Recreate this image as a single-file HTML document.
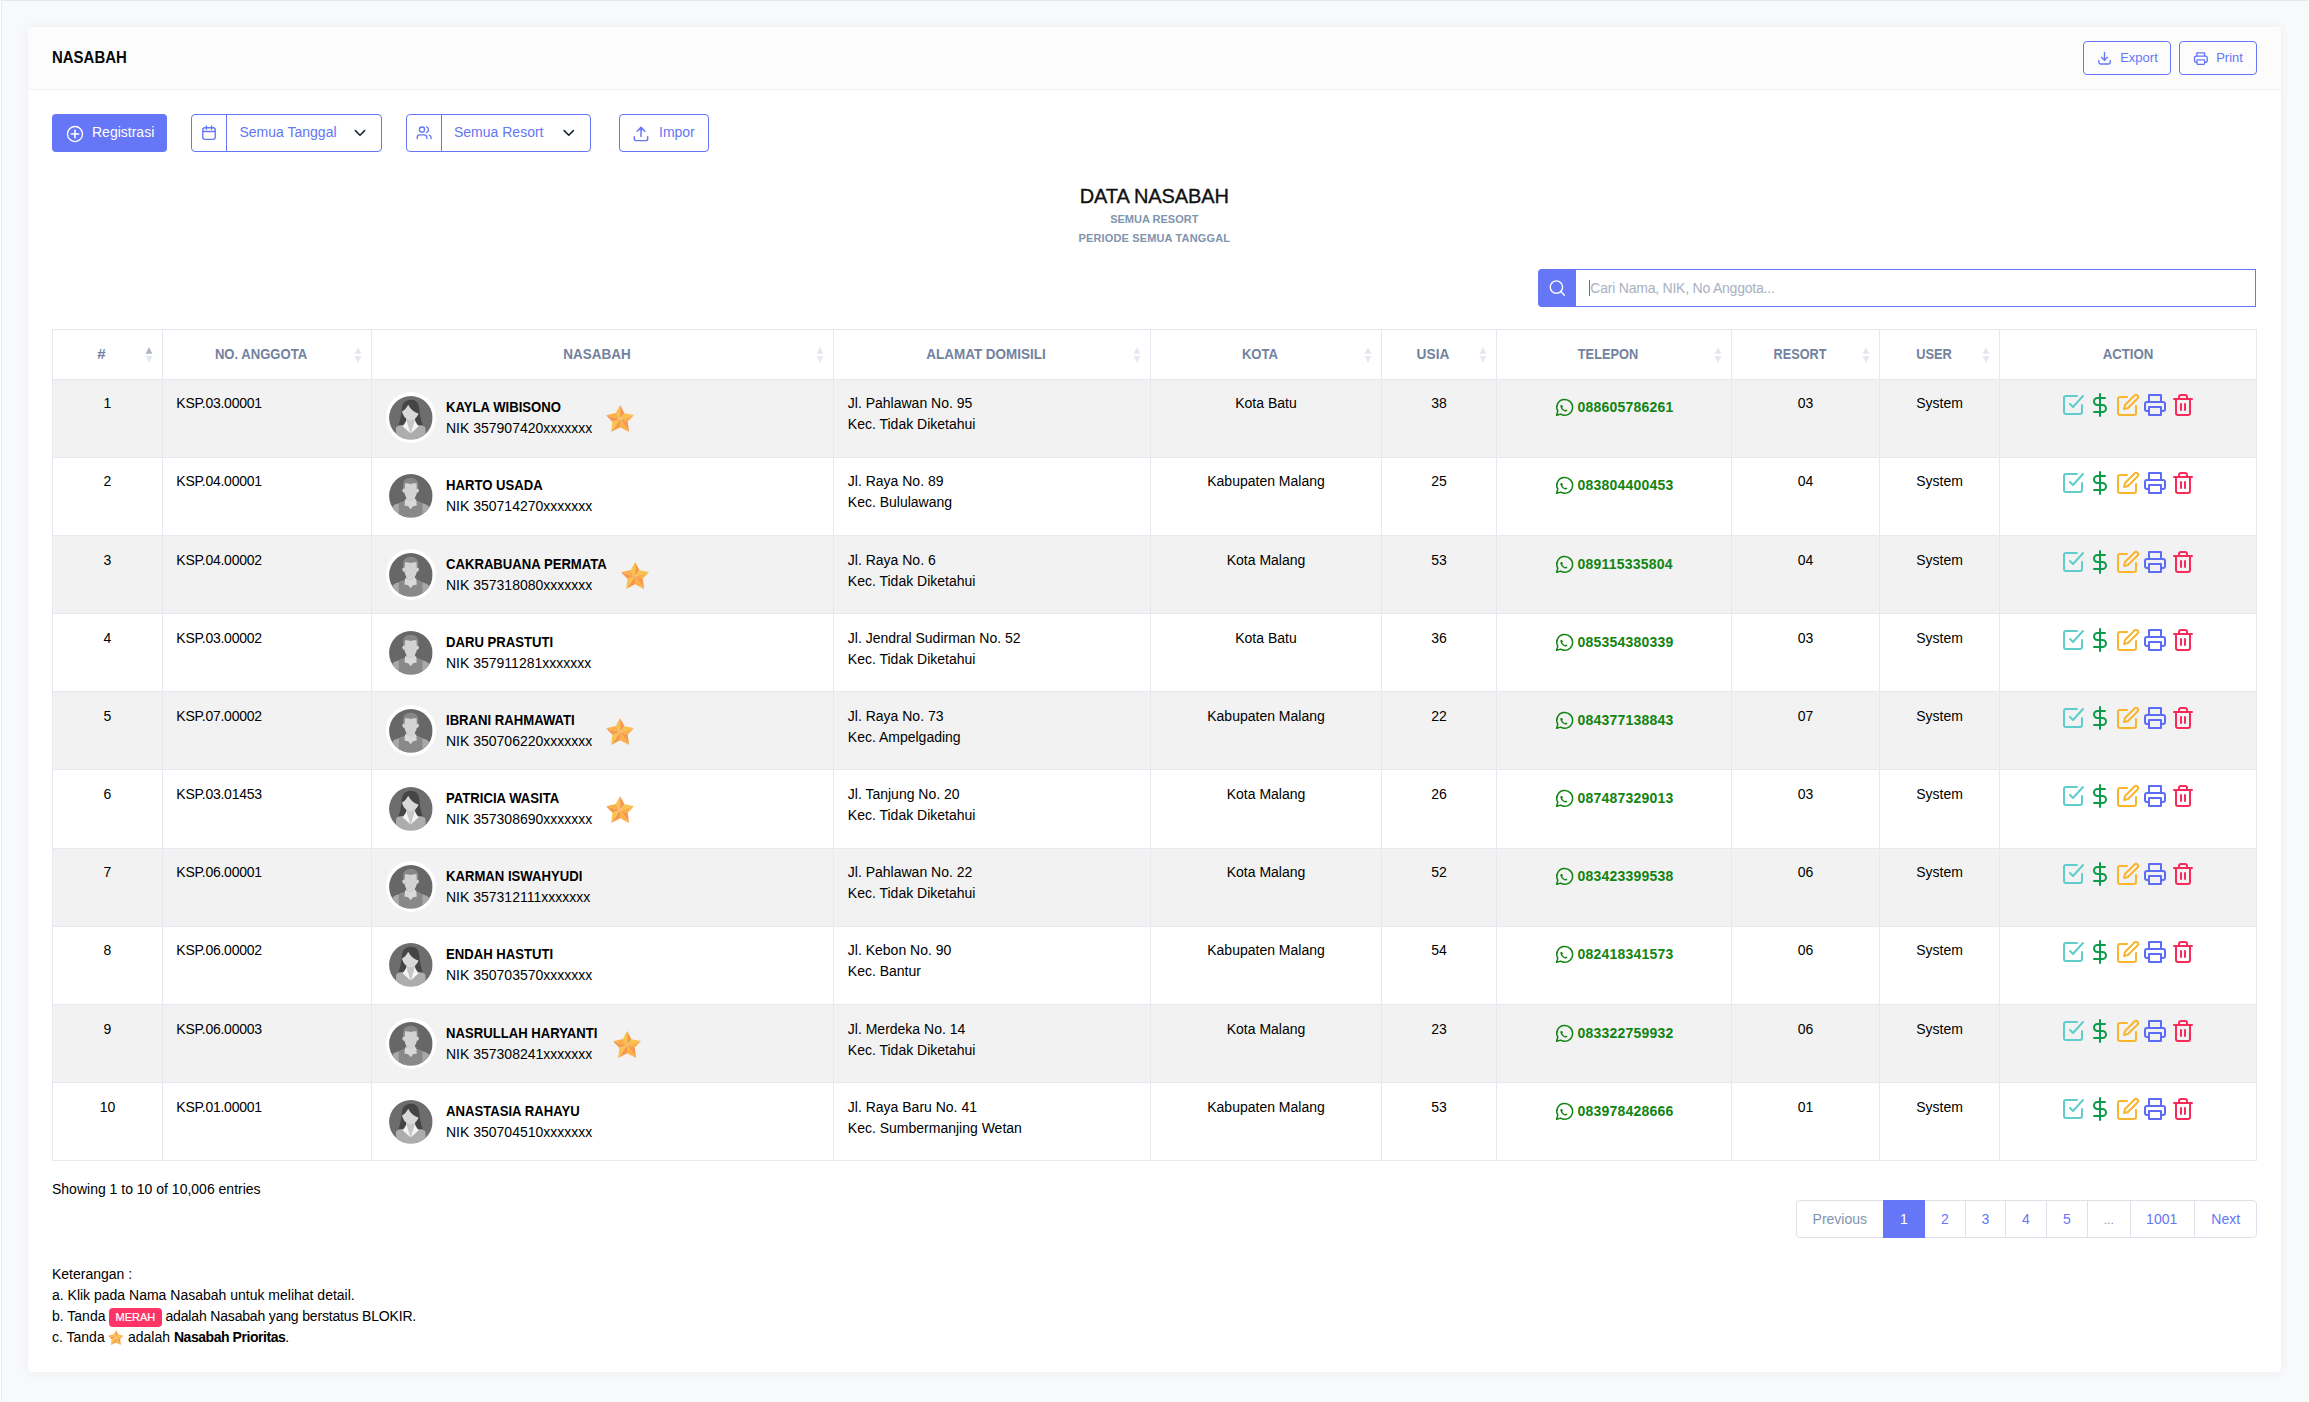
<!DOCTYPE html>
<html><head><meta charset="utf-8"><title>Nasabah</title>
<style>
html,body{margin:0;padding:0;}
body{width:2309px;height:1402px;overflow:hidden;position:relative;background:#f8f9fb;font-family:"Liberation Sans",sans-serif;}
.t{position:absolute;white-space:nowrap;line-height:20px;font-family:"Liberation Sans",sans-serif;}
svg{overflow:visible;}
</style></head><body>

<svg width="0" height="0" style="position:absolute">
<defs>
<symbol id="star" viewBox="0 0 28 27">
 <polygon points="14.1,14.1 9.8,7.9 14.1,0" fill="#f6c44b"/>
 <polygon points="14.1,14.1 14.1,0 18.5,8.2" fill="#f8994a"/>
 <polygon points="14.1,14.1 18.5,8.2 28,10" fill="#f7c34a"/>
 <polygon points="14.1,14.1 28,10 21.8,16.7" fill="#fbb147"/>
 <polygon points="14.1,14.1 21.8,16.7 23.1,26.9" fill="#f8994a"/>
 <polygon points="14.1,14.1 23.1,26.9 14.1,22.3" fill="#fbb147"/>
 <polygon points="14.1,14.1 14.1,22.3 5.1,26.9" fill="#f8994a"/>
 <polygon points="14.1,14.1 5.1,26.9 6.4,16.7" fill="#f6c44b"/>
 <polygon points="14.1,14.1 6.4,16.7 0,10.2" fill="#f8994a"/>
 <polygon points="14.1,14.1 0,10.2 9.8,7.9" fill="#fbb147"/>
</symbol>
<clipPath id="avclip"><circle cx="22" cy="22" r="21.9"/></clipPath>
<symbol id="avf" viewBox="0 0 44 44">
 <g clip-path="url(#avclip)">
 <rect width="44" height="44" fill="#6d6d6d"/>
 <path d="M21.8,3.8 C16,3.8 13.4,7.5 12.8,13 C12.2,19 11.5,24 9.5,29.8 L34,29.8 C32,24 31,19 30.6,13 C30,7 27.5,3.8 21.8,3.8 Z" fill="#454545"/>
 <path d="M17.6,21 L26.2,21 L26.6,28 L21.8,37.6 L17,28 Z" fill="#c7c7c7"/>
 <path d="M19.4,8.8 C17.5,12 15.5,14.5 13,15.6 C14.2,19.8 16.6,23.8 21.8,24.6 C26.6,23.8 28.6,20.6 29.8,17.6 C25,16.5 21.5,13 19.4,8.8 Z" fill="#d9d9d9"/>
 <path d="M7,44 L7,33 C7,31 8.5,30 11,29.8 L16.6,28.6 L21.8,37.6 L27.1,28.6 L32.6,29.8 C35,30 36.8,31 36.8,33 L36.8,44 Z" fill="#adadad"/>
 <path d="M17.9,24.2 L13.9,30.6 L21.8,37.7 L18.2,27 Z M25.7,24.2 L29.7,30.6 L21.8,37.7 L25.4,27 Z" fill="#f4f4f4"/>
 </g>
</symbol>
<symbol id="avm" viewBox="0 0 44 44">
 <g clip-path="url(#avclip)">
 <rect width="44" height="44" fill="#676767"/>
 <path d="M21.8,3.9 C16.8,3.9 14.1,6.8 14.1,11.2 L14.2,15.2 L29.4,15.2 L29.5,11.2 C29.5,6.8 26.8,3.9 21.8,3.9 Z" fill="#878787"/>
 <path d="M17.4,21 L26.2,21 L26.2,29 L17.4,29 Z" fill="#cfcfcf"/>
 <path d="M16.2,9.4 C18.3,8.9 20,9.4 21.8,10 C23.6,9.4 25.4,8.9 27.8,9.4 L27.9,14.8 C29,14.6 30.4,15 30.2,16.6 C30,18.2 29.2,18.9 28,19 C27.4,23 25.2,26 21.8,26.1 C18.4,26 16.2,23 15.6,19 C14.4,18.9 13.6,18.2 13.4,16.6 C13.2,15 14.6,14.6 15.7,14.8 Z" fill="#d3d3d3"/>
 <path d="M0,44 L0,36 L6,30.6 L10,29.4 L16.2,27 L21.8,35.6 L27.4,27 L33.6,29.4 L37.6,30.6 L44,36 L44,44 Z" fill="#a9a9a9"/>
 <path d="M9.9,44 L9.9,29.6 L16.2,27.6 L21.8,35.6 L27.4,27.6 L33.7,29.6 L33.7,44 Z" fill="#898989"/>
 <path d="M16.3,25.2 L21.8,27.6 L27.3,25.2 L28,31.6 L24.2,32.6 L21.8,35.4 L19.4,32.6 L15.6,31.6 Z" fill="#d9d9d9"/>
 </g>
</symbol>
</defs></svg>

<div style="position:absolute;left:0px;top:0px;width:2309px;height:1px;background:#e6e8ec"></div>
<div style="position:absolute;left:0px;top:0px;width:1px;height:1402px;background:#fdfdfd"></div>
<div style="position:absolute;left:1px;top:1px;width:1px;height:1401px;background:#e9ebef"></div>
<div style="position:absolute;left:2308px;top:0px;width:1px;height:1402px;background:#fdfdfd"></div>
<div style="position:absolute;left:28px;top:27px;width:2253px;height:1345px;background:#fff;border-radius:4px;box-shadow:0 0 10px 1px rgba(40,50,80,0.05)"></div>
<div style="position:absolute;left:28px;top:27px;width:2253px;height:62px;background:#fcfcfd;border-radius:4px 4px 0 0"></div>
<div style="position:absolute;left:28px;top:89px;width:2253px;height:1px;background:#f0f1f6"></div>
<div class="t" style="left:52.3px;top:48px;font-size:16px;font-weight:700;color:#0a0a0a;transform:scaleX(0.9350);transform-origin:left center;">NASABAH</div>
<div style="position:absolute;left:2083px;top:41px;width:86px;height:32px;border:1px solid #6576f6;border-radius:4px"></div>
<svg style="position:absolute;left:2096px;top:50px;" width="17" height="17" viewBox="0 0 17 17"><g fill="none" stroke="#6576f6" stroke-width="1.35" stroke-linecap="round" stroke-linejoin="round"><path d="M8.5,2.4 V10.4 M5.5,7.2 L8.5,10.4 L11.5,7.2"/><path d="M2.8,10.4 V12.2 A1.8,1.8 0 0 0 4.6,14 H12.4 A1.8,1.8 0 0 0 14.2,12.2 V10.4"/></g></svg>
<div class="t" style="left:2120.2px;top:48px;font-size:13px;font-weight:400;color:#6576f6;">Export</div>
<div style="position:absolute;left:2179px;top:41px;width:76px;height:32px;border:1px solid #6576f6;border-radius:4px"></div>
<svg style="position:absolute;left:2193px;top:50px;" width="16" height="17" viewBox="0 0 16 17"><g fill="none" stroke="#6576f6" stroke-width="1.35" stroke-linecap="round" stroke-linejoin="round"><path d="M3.9,6.1 V2.8 H11.6 V6.1"/><path d="M3.9,12.4 H2.9 A1.6,1.6 0 0 1 1.5,10.8 V7.7 A1.6,1.6 0 0 1 3.1,6.1 H12.6 A1.6,1.6 0 0 1 14.2,7.7 V10.8 A1.6,1.6 0 0 1 12.6,12.4 H11.6"/><rect x="3.9" y="9.8" width="7.7" height="4.6" rx="0.8"/></g></svg>
<div class="t" style="left:2216.2px;top:48px;font-size:13px;font-weight:400;color:#6576f6;">Print</div>
<div style="position:absolute;left:52px;top:114px;width:115px;height:38px;background:#6576f6;border-radius:4px"></div>
<svg style="position:absolute;left:64px;top:123px;" width="22" height="22" viewBox="0 0 22 22"><g fill="none" stroke="#fff" stroke-linecap="round"><circle cx="11" cy="11" r="7.55" stroke-width="1.35"/><path d="M11,7.3 V14.7 M7.3,11 H14.7" stroke-width="1.6"/></g></svg>
<div class="t" style="left:92px;top:122px;font-size:14px;font-weight:400;color:#fff;">Registrasi</div>
<div style="position:absolute;left:191px;top:114px;width:189px;height:36px;border:1px solid #6576f6;border-radius:4px"></div>
<div style="position:absolute;left:226px;top:114px;width:1px;height:38px;background:#6576f6"></div>
<svg style="position:absolute;left:200px;top:123px;" width="18" height="20" viewBox="0 0 18 20"><g fill="none" stroke="#6576f6" stroke-width="1.35" stroke-linecap="round" stroke-linejoin="round"><rect x="2.8" y="4.7" width="12.4" height="11.6" rx="2"/><path d="M2.8,8.5 H15.2 M6.4,2.8 V6.2 M11.6,2.8 V6.2"/></g></svg>
<div class="t" style="left:239.5px;top:122px;font-size:14px;font-weight:400;color:#6576f6;">Semua Tanggal</div>
<svg style="position:absolute;left:352px;top:127px;" width="16" height="12" viewBox="0 0 16 12"><path d="M3.4,3.6 L8,8.3 L12.6,3.6" fill="none" stroke="#1c2536" stroke-width="1.6" stroke-linecap="round" stroke-linejoin="round"/></svg>
<div style="position:absolute;left:406px;top:114px;width:183px;height:36px;border:1px solid #6576f6;border-radius:4px"></div>
<div style="position:absolute;left:441px;top:114px;width:1px;height:38px;background:#6576f6"></div>
<svg style="position:absolute;left:414px;top:123px;" width="20" height="20" viewBox="0 0 20 20"><g fill="none" stroke="#6576f6" stroke-width="1.35" stroke-linecap="round" stroke-linejoin="round"><circle cx="8" cy="6.6" r="2.6"/><path d="M3.2,15.6 V14.5 A2.6,2.6 0 0 1 5.8,11.9 H10.2 A2.6,2.6 0 0 1 12.8,14.5 V15.6"/><path d="M12.4,3.8 A3.05,3.05 0 0 1 12.4,9.6"/><path d="M17.1,15.6 V14.7 A2.9,2.9 0 0 0 15.2,12.1"/></g></svg>
<div class="t" style="left:454px;top:122px;font-size:14px;font-weight:400;color:#6576f6;">Semua Resort</div>
<svg style="position:absolute;left:561px;top:127px;" width="16" height="12" viewBox="0 0 16 12"><path d="M3.2,3.6 L7.8,8.3 L12.4,3.6" fill="none" stroke="#1c2536" stroke-width="1.6" stroke-linecap="round" stroke-linejoin="round"/></svg>
<div style="position:absolute;left:619px;top:114px;width:88px;height:36px;border:1px solid #6576f6;border-radius:4px"></div>
<svg style="position:absolute;left:630px;top:123px;" width="20" height="20" viewBox="0 0 20 20"><g fill="none" stroke="#6576f6" stroke-width="1.45" stroke-linecap="round" stroke-linejoin="round"><path d="M11,4.2 V13.6 M7.2,8.2 L11,4.2 L14.8,8.2"/><path d="M4.3,13.6 V15.8 A1.8,1.8 0 0 0 6.1,17.6 H15.9 A1.8,1.8 0 0 0 17.7,15.8 V13.6"/></g></svg>
<div class="t" style="left:659px;top:122px;font-size:14px;font-weight:400;color:#6576f6;">Impor</div>
<div class="t" style="left:854.30px;top:186px;width:600px;text-align:center;font-size:20px;font-weight:400;color:#111;-webkit-text-stroke:0.35px #111;letter-spacing:-0.1px">DATA NASABAH</div>
<div class="t" style="left:854.30px;top:209px;width:600px;text-align:center;font-size:11px;font-weight:700;color:#8094ae;">SEMUA RESORT</div>
<div class="t" style="left:854.30px;top:228px;width:600px;text-align:center;font-size:11px;font-weight:700;color:#8094ae;letter-spacing:0.15px">PERIODE SEMUA TANGGAL</div>
<div style="position:absolute;left:1538px;top:269px;width:38px;height:38px;background:#6576f6;border-radius:4px 0 0 4px"></div>
<div style="position:absolute;left:1576px;top:269px;width:679px;height:36px;border:1px solid #6576f6;border-left:none"></div>
<svg style="position:absolute;left:1544px;top:275px;" width="26" height="26" viewBox="0 0 26 26"><g fill="none" stroke="#fff" stroke-width="1.4" stroke-linecap="round"><circle cx="12.4" cy="12.1" r="6.2"/><path d="M16.8,16.6 L20.4,20.2"/></g></svg>
<div style="position:absolute;left:1589px;top:280px;width:1px;height:16px;background:#5563f0"></div>
<div class="t" style="left:1590.3px;top:278px;font-size:14px;font-weight:400;color:#a8b1c1;letter-spacing:-0.22px">Cari Nama, NIK, No Anggota...</div>
<div style="position:absolute;left:52px;top:380px;width:2205px;height:77px;background:#f2f2f2"></div>
<div style="position:absolute;left:52px;top:536px;width:2205px;height:77px;background:#f2f2f2"></div>
<div style="position:absolute;left:52px;top:692px;width:2205px;height:77px;background:#f2f2f2"></div>
<div style="position:absolute;left:52px;top:849px;width:2205px;height:77px;background:#f2f2f2"></div>
<div style="position:absolute;left:52px;top:1005px;width:2205px;height:77px;background:#f2f2f2"></div>
<div style="position:absolute;left:52px;top:329px;width:2205px;height:1px;background:#e6e9ef"></div>
<div style="position:absolute;left:52px;top:379px;width:2205px;height:1px;background:#e6e9ef"></div>
<div style="position:absolute;left:52px;top:457px;width:2205px;height:1px;background:#e6e9ef"></div>
<div style="position:absolute;left:52px;top:535px;width:2205px;height:1px;background:#e6e9ef"></div>
<div style="position:absolute;left:52px;top:613px;width:2205px;height:1px;background:#e6e9ef"></div>
<div style="position:absolute;left:52px;top:691px;width:2205px;height:1px;background:#e6e9ef"></div>
<div style="position:absolute;left:52px;top:769px;width:2205px;height:1px;background:#e6e9ef"></div>
<div style="position:absolute;left:52px;top:848px;width:2205px;height:1px;background:#e6e9ef"></div>
<div style="position:absolute;left:52px;top:926px;width:2205px;height:1px;background:#e6e9ef"></div>
<div style="position:absolute;left:52px;top:1004px;width:2205px;height:1px;background:#e6e9ef"></div>
<div style="position:absolute;left:52px;top:1082px;width:2205px;height:1px;background:#e6e9ef"></div>
<div style="position:absolute;left:52px;top:1160px;width:2205px;height:1px;background:#e6e9ef"></div>
<div style="position:absolute;left:52px;top:329px;width:1px;height:832px;background:#e6e9ef"></div>
<div style="position:absolute;left:162px;top:329px;width:1px;height:832px;background:#e6e9ef"></div>
<div style="position:absolute;left:371px;top:329px;width:1px;height:832px;background:#e6e9ef"></div>
<div style="position:absolute;left:833px;top:329px;width:1px;height:832px;background:#e6e9ef"></div>
<div style="position:absolute;left:1150px;top:329px;width:1px;height:832px;background:#e6e9ef"></div>
<div style="position:absolute;left:1381px;top:329px;width:1px;height:832px;background:#e6e9ef"></div>
<div style="position:absolute;left:1496px;top:329px;width:1px;height:832px;background:#e6e9ef"></div>
<div style="position:absolute;left:1731px;top:329px;width:1px;height:832px;background:#e6e9ef"></div>
<div style="position:absolute;left:1879px;top:329px;width:1px;height:832px;background:#e6e9ef"></div>
<div style="position:absolute;left:1999px;top:329px;width:1px;height:832px;background:#e6e9ef"></div>
<div style="position:absolute;left:2256px;top:329px;width:1px;height:832px;background:#e6e9ef"></div>
<div class="t" style="left:-48.50px;top:344px;width:300px;text-align:center;font-size:15px;font-weight:700;color:#7282a0;">#</div>
<svg style="position:absolute;left:144.5px;top:346px;" width="8" height="18" viewBox="0 0 8 18"><polygon points="0.6,7.7 4,1.1 7.4,7.7" fill="#a9b4c6"/><polygon points="0.6,9.9 7.4,9.9 4,16.9" fill="#e6e9ef"/></svg>
<div class="t" style="left:111.00px;top:344px;width:300px;text-align:center;font-size:15px;font-weight:700;color:#7282a0;transform:scaleX(0.8712);transform-origin:center center;">NO. ANGGOTA</div>
<svg style="position:absolute;left:353.5px;top:346px;" width="8" height="18" viewBox="0 0 8 18"><polygon points="0.6,7.7 4,1.1 7.4,7.7" fill="#e3e7ee"/><polygon points="0.6,9.9 7.4,9.9 4,16.9" fill="#e6e9ef"/></svg>
<div class="t" style="left:446.50px;top:344px;width:300px;text-align:center;font-size:15px;font-weight:700;color:#7282a0;transform:scaleX(0.8973);transform-origin:center center;">NASABAH</div>
<svg style="position:absolute;left:815.5px;top:346px;" width="8" height="18" viewBox="0 0 8 18"><polygon points="0.6,7.7 4,1.1 7.4,7.7" fill="#e3e7ee"/><polygon points="0.6,9.9 7.4,9.9 4,16.9" fill="#e6e9ef"/></svg>
<div class="t" style="left:836.00px;top:344px;width:300px;text-align:center;font-size:15px;font-weight:700;color:#7282a0;transform:scaleX(0.8977);transform-origin:center center;">ALAMAT DOMISILI</div>
<svg style="position:absolute;left:1132.5px;top:346px;" width="8" height="18" viewBox="0 0 8 18"><polygon points="0.6,7.7 4,1.1 7.4,7.7" fill="#e3e7ee"/><polygon points="0.6,9.9 7.4,9.9 4,16.9" fill="#e6e9ef"/></svg>
<div class="t" style="left:1110.00px;top:344px;width:300px;text-align:center;font-size:15px;font-weight:700;color:#7282a0;transform:scaleX(0.8750);transform-origin:center center;">KOTA</div>
<svg style="position:absolute;left:1363.5px;top:346px;" width="8" height="18" viewBox="0 0 8 18"><polygon points="0.6,7.7 4,1.1 7.4,7.7" fill="#e3e7ee"/><polygon points="0.6,9.9 7.4,9.9 4,16.9" fill="#e6e9ef"/></svg>
<div class="t" style="left:1283.00px;top:344px;width:300px;text-align:center;font-size:15px;font-weight:700;color:#7282a0;transform:scaleX(0.9147);transform-origin:center center;">USIA</div>
<svg style="position:absolute;left:1478.5px;top:346px;" width="8" height="18" viewBox="0 0 8 18"><polygon points="0.6,7.7 4,1.1 7.4,7.7" fill="#e3e7ee"/><polygon points="0.6,9.9 7.4,9.9 4,16.9" fill="#e6e9ef"/></svg>
<div class="t" style="left:1458.00px;top:344px;width:300px;text-align:center;font-size:15px;font-weight:700;color:#7282a0;transform:scaleX(0.8529);transform-origin:center center;">TELEPON</div>
<svg style="position:absolute;left:1713.5px;top:346px;" width="8" height="18" viewBox="0 0 8 18"><polygon points="0.6,7.7 4,1.1 7.4,7.7" fill="#e3e7ee"/><polygon points="0.6,9.9 7.4,9.9 4,16.9" fill="#e6e9ef"/></svg>
<div class="t" style="left:1649.50px;top:344px;width:300px;text-align:center;font-size:15px;font-weight:700;color:#7282a0;transform:scaleX(0.8459);transform-origin:center center;">RESORT</div>
<svg style="position:absolute;left:1861.5px;top:346px;" width="8" height="18" viewBox="0 0 8 18"><polygon points="0.6,7.7 4,1.1 7.4,7.7" fill="#e3e7ee"/><polygon points="0.6,9.9 7.4,9.9 4,16.9" fill="#e6e9ef"/></svg>
<div class="t" style="left:1783.50px;top:344px;width:300px;text-align:center;font-size:15px;font-weight:700;color:#7282a0;transform:scaleX(0.8550);transform-origin:center center;">USER</div>
<svg style="position:absolute;left:1981.5px;top:346px;" width="8" height="18" viewBox="0 0 8 18"><polygon points="0.6,7.7 4,1.1 7.4,7.7" fill="#e3e7ee"/><polygon points="0.6,9.9 7.4,9.9 4,16.9" fill="#e6e9ef"/></svg>
<div class="t" style="left:1978.00px;top:344px;width:300px;text-align:center;font-size:15px;font-weight:700;color:#7282a0;transform:scaleX(0.8825);transform-origin:center center;">ACTION</div>
<div class="t" style="left:57.50px;top:393px;width:100px;text-align:center;font-size:14px;font-weight:400;color:#000;">1</div>
<div class="t" style="left:176.3px;top:393px;font-size:14px;font-weight:400;color:#000;letter-spacing:-0.25px">KSP.03.00001</div>
<div style="position:absolute;left:385.9px;top:392.45000000000005px;width:50.3px;height:50.3px;background:#fff;border-radius:50%"></div>
<svg style="position:absolute;left:389.2px;top:395.75px;" width="43.7" height="43.7" viewBox="0 0 44 44"><use href="#avf"/></svg>
<div class="t" style="left:445.6px;top:397px;font-size:14px;font-weight:700;color:#000;transform:scaleX(0.9370);transform-origin:left center;">KAYLA WIBISONO</div>
<div class="t" style="left:446px;top:418px;font-size:14px;font-weight:400;color:#000;">NIK 357907420xxxxxxx</div>
<!--star-->
<svg style="position:absolute;left:605.9px;top:404.9px;" width="28" height="27" viewBox="0 0 28 27"><use href="#star"/></svg>
<div class="t" style="left:847.8px;top:393px;font-size:14px;font-weight:400;color:#000;">Jl. Pahlawan No. 95</div>
<div class="t" style="left:847.8px;top:414px;font-size:14px;font-weight:400;color:#000;">Kec. Tidak Diketahui</div>
<div class="t" style="left:1156.00px;top:393px;width:220px;text-align:center;font-size:14px;font-weight:400;color:#000;">Kota Batu</div>
<div class="t" style="left:1389.00px;top:393px;width:100px;text-align:center;font-size:14px;font-weight:400;color:#000;">38</div>
<svg style="position:absolute;left:1553.5px;top:398px;" width="19" height="19" viewBox="0 0 19 19"><g fill="none" stroke="#118411" stroke-width="1.5" stroke-linejoin="round"><path d="M2.6,17.3 L3.8,13.2 A7.9,7.9 0 1 1 6.6,16.1 Z"/></g><path d="M6.9,6.9 C6.6,7.2 6.2,7.9 6.5,9 C7.1,11 8.9,12.9 11,13.5 C12.1,13.8 12.8,13.5 13.1,13.1 L13.4,12.2 L11.7,11.4 L10.9,12.2 C10,11.9 8.6,10.6 8.2,9.6 L8.9,8.8 L8.2,6.9 Z" fill="#118411"/></svg>
<div class="t" style="left:1577.5px;top:397px;font-size:14px;font-weight:700;color:#118411;letter-spacing:0.22px">088605786261</div>
<div class="t" style="left:1755.50px;top:393px;width:100px;text-align:center;font-size:14px;font-weight:400;color:#000;">03</div>
<div class="t" style="left:1884.50px;top:393px;width:110px;text-align:center;font-size:14px;font-weight:400;color:#000;">System</div>
<svg style="position:absolute;left:2061.1px;top:393px;" width="24" height="24" viewBox="0 0 24 24"><g stroke="#5fcdcc" stroke-width="2" fill="none" stroke-linecap="round" stroke-linejoin="round"><polyline points="9 11 12 14 22 3"/><path d="M21 12v7a2 2 0 0 1-2 2H5a2 2 0 0 1-2-2V5a2 2 0 0 1 2-2h11"/></g></svg>
<svg style="position:absolute;left:2087.8px;top:393px;" width="24" height="24" viewBox="0 0 24 24"><g stroke="#0c9b49" stroke-width="2" fill="none" stroke-linecap="round" stroke-linejoin="round"><line x1="12" y1="1" x2="12" y2="23"/><path d="M17 5H9.5a3.5 3.5 0 0 0 0 7h5a3.5 3.5 0 0 1 0 7H6"/></g></svg>
<svg style="position:absolute;left:2116px;top:393px;" width="24" height="24" viewBox="0 0 24 24"><g stroke="#f9b52e" stroke-width="2" fill="none" stroke-linecap="round" stroke-linejoin="round"><path d="M11 4H4a2 2 0 0 0-2 2v14a2 2 0 0 0 2 2h14a2 2 0 0 0 2-2v-7"/><path d="M18.5 2.5a2.121 2.121 0 0 1 3 3L12 15l-4 1 1-4 9.5-9.5z"/></g></svg>
<svg style="position:absolute;left:2143.1px;top:393px;" width="24" height="24" viewBox="0 0 24 24"><g stroke="#5c6cf7" stroke-width="2" fill="none" stroke-linecap="round" stroke-linejoin="round"><polyline points="6 9 6 2 18 2 18 9"/><path d="M6 18H4a2 2 0 0 1-2-2v-5a2 2 0 0 1 2-2h16a2 2 0 0 1 2 2v5a2 2 0 0 1-2 2h-2"/><rect x="6" y="14" width="12" height="8"/></g></svg>
<svg style="position:absolute;left:2170.9px;top:393px;" width="24" height="24" viewBox="0 0 24 24"><g stroke="#f72a5a" stroke-width="2" fill="none" stroke-linecap="round" stroke-linejoin="round"><polyline points="3 6 5 6 21 6"/><path d="M19 6v14a2 2 0 0 1-2 2H7a2 2 0 0 1-2-2V6m3 0V4a2 2 0 0 1 2-2h4a2 2 0 0 1 2 2v2"/><line x1="10" y1="11" x2="10" y2="17"/><line x1="14" y1="11" x2="14" y2="17"/></g></svg>
<div class="t" style="left:57.50px;top:471px;width:100px;text-align:center;font-size:14px;font-weight:400;color:#000;">2</div>
<div class="t" style="left:176.3px;top:471px;font-size:14px;font-weight:400;color:#000;letter-spacing:-0.25px">KSP.04.00001</div>
<svg style="position:absolute;left:389.2px;top:473.75px;" width="43.7" height="43.7" viewBox="0 0 44 44"><use href="#avm"/></svg>
<div class="t" style="left:445.6px;top:475px;font-size:14px;font-weight:700;color:#000;transform:scaleX(0.9370);transform-origin:left center;">HARTO USADA</div>
<div class="t" style="left:446px;top:496px;font-size:14px;font-weight:400;color:#000;">NIK 350714270xxxxxxx</div>
<div class="t" style="left:847.8px;top:471px;font-size:14px;font-weight:400;color:#000;">Jl. Raya No. 89</div>
<div class="t" style="left:847.8px;top:492px;font-size:14px;font-weight:400;color:#000;">Kec. Bululawang</div>
<div class="t" style="left:1156.00px;top:471px;width:220px;text-align:center;font-size:14px;font-weight:400;color:#000;">Kabupaten Malang</div>
<div class="t" style="left:1389.00px;top:471px;width:100px;text-align:center;font-size:14px;font-weight:400;color:#000;">25</div>
<svg style="position:absolute;left:1553.5px;top:476px;" width="19" height="19" viewBox="0 0 19 19"><g fill="none" stroke="#118411" stroke-width="1.5" stroke-linejoin="round"><path d="M2.6,17.3 L3.8,13.2 A7.9,7.9 0 1 1 6.6,16.1 Z"/></g><path d="M6.9,6.9 C6.6,7.2 6.2,7.9 6.5,9 C7.1,11 8.9,12.9 11,13.5 C12.1,13.8 12.8,13.5 13.1,13.1 L13.4,12.2 L11.7,11.4 L10.9,12.2 C10,11.9 8.6,10.6 8.2,9.6 L8.9,8.8 L8.2,6.9 Z" fill="#118411"/></svg>
<div class="t" style="left:1577.5px;top:475px;font-size:14px;font-weight:700;color:#118411;letter-spacing:0.22px">083804400453</div>
<div class="t" style="left:1755.50px;top:471px;width:100px;text-align:center;font-size:14px;font-weight:400;color:#000;">04</div>
<div class="t" style="left:1884.50px;top:471px;width:110px;text-align:center;font-size:14px;font-weight:400;color:#000;">System</div>
<svg style="position:absolute;left:2061.1px;top:471px;" width="24" height="24" viewBox="0 0 24 24"><g stroke="#5fcdcc" stroke-width="2" fill="none" stroke-linecap="round" stroke-linejoin="round"><polyline points="9 11 12 14 22 3"/><path d="M21 12v7a2 2 0 0 1-2 2H5a2 2 0 0 1-2-2V5a2 2 0 0 1 2-2h11"/></g></svg>
<svg style="position:absolute;left:2087.8px;top:471px;" width="24" height="24" viewBox="0 0 24 24"><g stroke="#0c9b49" stroke-width="2" fill="none" stroke-linecap="round" stroke-linejoin="round"><line x1="12" y1="1" x2="12" y2="23"/><path d="M17 5H9.5a3.5 3.5 0 0 0 0 7h5a3.5 3.5 0 0 1 0 7H6"/></g></svg>
<svg style="position:absolute;left:2116px;top:471px;" width="24" height="24" viewBox="0 0 24 24"><g stroke="#f9b52e" stroke-width="2" fill="none" stroke-linecap="round" stroke-linejoin="round"><path d="M11 4H4a2 2 0 0 0-2 2v14a2 2 0 0 0 2 2h14a2 2 0 0 0 2-2v-7"/><path d="M18.5 2.5a2.121 2.121 0 0 1 3 3L12 15l-4 1 1-4 9.5-9.5z"/></g></svg>
<svg style="position:absolute;left:2143.1px;top:471px;" width="24" height="24" viewBox="0 0 24 24"><g stroke="#5c6cf7" stroke-width="2" fill="none" stroke-linecap="round" stroke-linejoin="round"><polyline points="6 9 6 2 18 2 18 9"/><path d="M6 18H4a2 2 0 0 1-2-2v-5a2 2 0 0 1 2-2h16a2 2 0 0 1 2 2v5a2 2 0 0 1-2 2h-2"/><rect x="6" y="14" width="12" height="8"/></g></svg>
<svg style="position:absolute;left:2170.9px;top:471px;" width="24" height="24" viewBox="0 0 24 24"><g stroke="#f72a5a" stroke-width="2" fill="none" stroke-linecap="round" stroke-linejoin="round"><polyline points="3 6 5 6 21 6"/><path d="M19 6v14a2 2 0 0 1-2 2H7a2 2 0 0 1-2-2V6m3 0V4a2 2 0 0 1 2-2h4a2 2 0 0 1 2 2v2"/><line x1="10" y1="11" x2="10" y2="17"/><line x1="14" y1="11" x2="14" y2="17"/></g></svg>
<div class="t" style="left:57.50px;top:550px;width:100px;text-align:center;font-size:14px;font-weight:400;color:#000;">3</div>
<div class="t" style="left:176.3px;top:550px;font-size:14px;font-weight:400;color:#000;letter-spacing:-0.25px">KSP.04.00002</div>
<div style="position:absolute;left:385.9px;top:549.45px;width:50.3px;height:50.3px;background:#fff;border-radius:50%"></div>
<svg style="position:absolute;left:389.2px;top:552.75px;" width="43.7" height="43.7" viewBox="0 0 44 44"><use href="#avm"/></svg>
<div class="t" style="left:445.6px;top:554px;font-size:14px;font-weight:700;color:#000;transform:scaleX(0.9370);transform-origin:left center;">CAKRABUANA PERMATA</div>
<div class="t" style="left:446px;top:575px;font-size:14px;font-weight:400;color:#000;">NIK 357318080xxxxxxx</div>
<!--star-->
<svg style="position:absolute;left:621.0px;top:561.9px;" width="28" height="27" viewBox="0 0 28 27"><use href="#star"/></svg>
<div class="t" style="left:847.8px;top:550px;font-size:14px;font-weight:400;color:#000;">Jl. Raya No. 6</div>
<div class="t" style="left:847.8px;top:571px;font-size:14px;font-weight:400;color:#000;">Kec. Tidak Diketahui</div>
<div class="t" style="left:1156.00px;top:550px;width:220px;text-align:center;font-size:14px;font-weight:400;color:#000;">Kota Malang</div>
<div class="t" style="left:1389.00px;top:550px;width:100px;text-align:center;font-size:14px;font-weight:400;color:#000;">53</div>
<svg style="position:absolute;left:1553.5px;top:555px;" width="19" height="19" viewBox="0 0 19 19"><g fill="none" stroke="#118411" stroke-width="1.5" stroke-linejoin="round"><path d="M2.6,17.3 L3.8,13.2 A7.9,7.9 0 1 1 6.6,16.1 Z"/></g><path d="M6.9,6.9 C6.6,7.2 6.2,7.9 6.5,9 C7.1,11 8.9,12.9 11,13.5 C12.1,13.8 12.8,13.5 13.1,13.1 L13.4,12.2 L11.7,11.4 L10.9,12.2 C10,11.9 8.6,10.6 8.2,9.6 L8.9,8.8 L8.2,6.9 Z" fill="#118411"/></svg>
<div class="t" style="left:1577.5px;top:554px;font-size:14px;font-weight:700;color:#118411;letter-spacing:0.22px">089115335804</div>
<div class="t" style="left:1755.50px;top:550px;width:100px;text-align:center;font-size:14px;font-weight:400;color:#000;">04</div>
<div class="t" style="left:1884.50px;top:550px;width:110px;text-align:center;font-size:14px;font-weight:400;color:#000;">System</div>
<svg style="position:absolute;left:2061.1px;top:550px;" width="24" height="24" viewBox="0 0 24 24"><g stroke="#5fcdcc" stroke-width="2" fill="none" stroke-linecap="round" stroke-linejoin="round"><polyline points="9 11 12 14 22 3"/><path d="M21 12v7a2 2 0 0 1-2 2H5a2 2 0 0 1-2-2V5a2 2 0 0 1 2-2h11"/></g></svg>
<svg style="position:absolute;left:2087.8px;top:550px;" width="24" height="24" viewBox="0 0 24 24"><g stroke="#0c9b49" stroke-width="2" fill="none" stroke-linecap="round" stroke-linejoin="round"><line x1="12" y1="1" x2="12" y2="23"/><path d="M17 5H9.5a3.5 3.5 0 0 0 0 7h5a3.5 3.5 0 0 1 0 7H6"/></g></svg>
<svg style="position:absolute;left:2116px;top:550px;" width="24" height="24" viewBox="0 0 24 24"><g stroke="#f9b52e" stroke-width="2" fill="none" stroke-linecap="round" stroke-linejoin="round"><path d="M11 4H4a2 2 0 0 0-2 2v14a2 2 0 0 0 2 2h14a2 2 0 0 0 2-2v-7"/><path d="M18.5 2.5a2.121 2.121 0 0 1 3 3L12 15l-4 1 1-4 9.5-9.5z"/></g></svg>
<svg style="position:absolute;left:2143.1px;top:550px;" width="24" height="24" viewBox="0 0 24 24"><g stroke="#5c6cf7" stroke-width="2" fill="none" stroke-linecap="round" stroke-linejoin="round"><polyline points="6 9 6 2 18 2 18 9"/><path d="M6 18H4a2 2 0 0 1-2-2v-5a2 2 0 0 1 2-2h16a2 2 0 0 1 2 2v5a2 2 0 0 1-2 2h-2"/><rect x="6" y="14" width="12" height="8"/></g></svg>
<svg style="position:absolute;left:2170.9px;top:550px;" width="24" height="24" viewBox="0 0 24 24"><g stroke="#f72a5a" stroke-width="2" fill="none" stroke-linecap="round" stroke-linejoin="round"><polyline points="3 6 5 6 21 6"/><path d="M19 6v14a2 2 0 0 1-2 2H7a2 2 0 0 1-2-2V6m3 0V4a2 2 0 0 1 2-2h4a2 2 0 0 1 2 2v2"/><line x1="10" y1="11" x2="10" y2="17"/><line x1="14" y1="11" x2="14" y2="17"/></g></svg>
<div class="t" style="left:57.50px;top:628px;width:100px;text-align:center;font-size:14px;font-weight:400;color:#000;">4</div>
<div class="t" style="left:176.3px;top:628px;font-size:14px;font-weight:400;color:#000;letter-spacing:-0.25px">KSP.03.00002</div>
<svg style="position:absolute;left:389.2px;top:630.75px;" width="43.7" height="43.7" viewBox="0 0 44 44"><use href="#avm"/></svg>
<div class="t" style="left:445.6px;top:632px;font-size:14px;font-weight:700;color:#000;transform:scaleX(0.9370);transform-origin:left center;">DARU PRASTUTI</div>
<div class="t" style="left:446px;top:653px;font-size:14px;font-weight:400;color:#000;">NIK 357911281xxxxxxx</div>
<div class="t" style="left:847.8px;top:628px;font-size:14px;font-weight:400;color:#000;">Jl. Jendral Sudirman No. 52</div>
<div class="t" style="left:847.8px;top:649px;font-size:14px;font-weight:400;color:#000;">Kec. Tidak Diketahui</div>
<div class="t" style="left:1156.00px;top:628px;width:220px;text-align:center;font-size:14px;font-weight:400;color:#000;">Kota Batu</div>
<div class="t" style="left:1389.00px;top:628px;width:100px;text-align:center;font-size:14px;font-weight:400;color:#000;">36</div>
<svg style="position:absolute;left:1553.5px;top:633px;" width="19" height="19" viewBox="0 0 19 19"><g fill="none" stroke="#118411" stroke-width="1.5" stroke-linejoin="round"><path d="M2.6,17.3 L3.8,13.2 A7.9,7.9 0 1 1 6.6,16.1 Z"/></g><path d="M6.9,6.9 C6.6,7.2 6.2,7.9 6.5,9 C7.1,11 8.9,12.9 11,13.5 C12.1,13.8 12.8,13.5 13.1,13.1 L13.4,12.2 L11.7,11.4 L10.9,12.2 C10,11.9 8.6,10.6 8.2,9.6 L8.9,8.8 L8.2,6.9 Z" fill="#118411"/></svg>
<div class="t" style="left:1577.5px;top:632px;font-size:14px;font-weight:700;color:#118411;letter-spacing:0.22px">085354380339</div>
<div class="t" style="left:1755.50px;top:628px;width:100px;text-align:center;font-size:14px;font-weight:400;color:#000;">03</div>
<div class="t" style="left:1884.50px;top:628px;width:110px;text-align:center;font-size:14px;font-weight:400;color:#000;">System</div>
<svg style="position:absolute;left:2061.1px;top:628px;" width="24" height="24" viewBox="0 0 24 24"><g stroke="#5fcdcc" stroke-width="2" fill="none" stroke-linecap="round" stroke-linejoin="round"><polyline points="9 11 12 14 22 3"/><path d="M21 12v7a2 2 0 0 1-2 2H5a2 2 0 0 1-2-2V5a2 2 0 0 1 2-2h11"/></g></svg>
<svg style="position:absolute;left:2087.8px;top:628px;" width="24" height="24" viewBox="0 0 24 24"><g stroke="#0c9b49" stroke-width="2" fill="none" stroke-linecap="round" stroke-linejoin="round"><line x1="12" y1="1" x2="12" y2="23"/><path d="M17 5H9.5a3.5 3.5 0 0 0 0 7h5a3.5 3.5 0 0 1 0 7H6"/></g></svg>
<svg style="position:absolute;left:2116px;top:628px;" width="24" height="24" viewBox="0 0 24 24"><g stroke="#f9b52e" stroke-width="2" fill="none" stroke-linecap="round" stroke-linejoin="round"><path d="M11 4H4a2 2 0 0 0-2 2v14a2 2 0 0 0 2 2h14a2 2 0 0 0 2-2v-7"/><path d="M18.5 2.5a2.121 2.121 0 0 1 3 3L12 15l-4 1 1-4 9.5-9.5z"/></g></svg>
<svg style="position:absolute;left:2143.1px;top:628px;" width="24" height="24" viewBox="0 0 24 24"><g stroke="#5c6cf7" stroke-width="2" fill="none" stroke-linecap="round" stroke-linejoin="round"><polyline points="6 9 6 2 18 2 18 9"/><path d="M6 18H4a2 2 0 0 1-2-2v-5a2 2 0 0 1 2-2h16a2 2 0 0 1 2 2v5a2 2 0 0 1-2 2h-2"/><rect x="6" y="14" width="12" height="8"/></g></svg>
<svg style="position:absolute;left:2170.9px;top:628px;" width="24" height="24" viewBox="0 0 24 24"><g stroke="#f72a5a" stroke-width="2" fill="none" stroke-linecap="round" stroke-linejoin="round"><polyline points="3 6 5 6 21 6"/><path d="M19 6v14a2 2 0 0 1-2 2H7a2 2 0 0 1-2-2V6m3 0V4a2 2 0 0 1 2-2h4a2 2 0 0 1 2 2v2"/><line x1="10" y1="11" x2="10" y2="17"/><line x1="14" y1="11" x2="14" y2="17"/></g></svg>
<div class="t" style="left:57.50px;top:706px;width:100px;text-align:center;font-size:14px;font-weight:400;color:#000;">5</div>
<div class="t" style="left:176.3px;top:706px;font-size:14px;font-weight:400;color:#000;letter-spacing:-0.25px">KSP.07.00002</div>
<div style="position:absolute;left:385.9px;top:705.45px;width:50.3px;height:50.3px;background:#fff;border-radius:50%"></div>
<svg style="position:absolute;left:389.2px;top:708.75px;" width="43.7" height="43.7" viewBox="0 0 44 44"><use href="#avm"/></svg>
<div class="t" style="left:445.6px;top:710px;font-size:14px;font-weight:700;color:#000;transform:scaleX(0.9370);transform-origin:left center;">IBRANI RAHMAWATI</div>
<div class="t" style="left:446px;top:731px;font-size:14px;font-weight:400;color:#000;">NIK 350706220xxxxxxx</div>
<!--star-->
<svg style="position:absolute;left:605.9px;top:717.9px;" width="28" height="27" viewBox="0 0 28 27"><use href="#star"/></svg>
<div class="t" style="left:847.8px;top:706px;font-size:14px;font-weight:400;color:#000;">Jl. Raya No. 73</div>
<div class="t" style="left:847.8px;top:727px;font-size:14px;font-weight:400;color:#000;">Kec. Ampelgading</div>
<div class="t" style="left:1156.00px;top:706px;width:220px;text-align:center;font-size:14px;font-weight:400;color:#000;">Kabupaten Malang</div>
<div class="t" style="left:1389.00px;top:706px;width:100px;text-align:center;font-size:14px;font-weight:400;color:#000;">22</div>
<svg style="position:absolute;left:1553.5px;top:711px;" width="19" height="19" viewBox="0 0 19 19"><g fill="none" stroke="#118411" stroke-width="1.5" stroke-linejoin="round"><path d="M2.6,17.3 L3.8,13.2 A7.9,7.9 0 1 1 6.6,16.1 Z"/></g><path d="M6.9,6.9 C6.6,7.2 6.2,7.9 6.5,9 C7.1,11 8.9,12.9 11,13.5 C12.1,13.8 12.8,13.5 13.1,13.1 L13.4,12.2 L11.7,11.4 L10.9,12.2 C10,11.9 8.6,10.6 8.2,9.6 L8.9,8.8 L8.2,6.9 Z" fill="#118411"/></svg>
<div class="t" style="left:1577.5px;top:710px;font-size:14px;font-weight:700;color:#118411;letter-spacing:0.22px">084377138843</div>
<div class="t" style="left:1755.50px;top:706px;width:100px;text-align:center;font-size:14px;font-weight:400;color:#000;">07</div>
<div class="t" style="left:1884.50px;top:706px;width:110px;text-align:center;font-size:14px;font-weight:400;color:#000;">System</div>
<svg style="position:absolute;left:2061.1px;top:706px;" width="24" height="24" viewBox="0 0 24 24"><g stroke="#5fcdcc" stroke-width="2" fill="none" stroke-linecap="round" stroke-linejoin="round"><polyline points="9 11 12 14 22 3"/><path d="M21 12v7a2 2 0 0 1-2 2H5a2 2 0 0 1-2-2V5a2 2 0 0 1 2-2h11"/></g></svg>
<svg style="position:absolute;left:2087.8px;top:706px;" width="24" height="24" viewBox="0 0 24 24"><g stroke="#0c9b49" stroke-width="2" fill="none" stroke-linecap="round" stroke-linejoin="round"><line x1="12" y1="1" x2="12" y2="23"/><path d="M17 5H9.5a3.5 3.5 0 0 0 0 7h5a3.5 3.5 0 0 1 0 7H6"/></g></svg>
<svg style="position:absolute;left:2116px;top:706px;" width="24" height="24" viewBox="0 0 24 24"><g stroke="#f9b52e" stroke-width="2" fill="none" stroke-linecap="round" stroke-linejoin="round"><path d="M11 4H4a2 2 0 0 0-2 2v14a2 2 0 0 0 2 2h14a2 2 0 0 0 2-2v-7"/><path d="M18.5 2.5a2.121 2.121 0 0 1 3 3L12 15l-4 1 1-4 9.5-9.5z"/></g></svg>
<svg style="position:absolute;left:2143.1px;top:706px;" width="24" height="24" viewBox="0 0 24 24"><g stroke="#5c6cf7" stroke-width="2" fill="none" stroke-linecap="round" stroke-linejoin="round"><polyline points="6 9 6 2 18 2 18 9"/><path d="M6 18H4a2 2 0 0 1-2-2v-5a2 2 0 0 1 2-2h16a2 2 0 0 1 2 2v5a2 2 0 0 1-2 2h-2"/><rect x="6" y="14" width="12" height="8"/></g></svg>
<svg style="position:absolute;left:2170.9px;top:706px;" width="24" height="24" viewBox="0 0 24 24"><g stroke="#f72a5a" stroke-width="2" fill="none" stroke-linecap="round" stroke-linejoin="round"><polyline points="3 6 5 6 21 6"/><path d="M19 6v14a2 2 0 0 1-2 2H7a2 2 0 0 1-2-2V6m3 0V4a2 2 0 0 1 2-2h4a2 2 0 0 1 2 2v2"/><line x1="10" y1="11" x2="10" y2="17"/><line x1="14" y1="11" x2="14" y2="17"/></g></svg>
<div class="t" style="left:57.50px;top:784px;width:100px;text-align:center;font-size:14px;font-weight:400;color:#000;">6</div>
<div class="t" style="left:176.3px;top:784px;font-size:14px;font-weight:400;color:#000;letter-spacing:-0.25px">KSP.03.01453</div>
<svg style="position:absolute;left:389.2px;top:786.75px;" width="43.7" height="43.7" viewBox="0 0 44 44"><use href="#avf"/></svg>
<div class="t" style="left:445.6px;top:788px;font-size:14px;font-weight:700;color:#000;transform:scaleX(0.9370);transform-origin:left center;">PATRICIA WASITA</div>
<div class="t" style="left:446px;top:809px;font-size:14px;font-weight:400;color:#000;">NIK 357308690xxxxxxx</div>
<!--star-->
<svg style="position:absolute;left:605.9px;top:795.9px;" width="28" height="27" viewBox="0 0 28 27"><use href="#star"/></svg>
<div class="t" style="left:847.8px;top:784px;font-size:14px;font-weight:400;color:#000;">Jl. Tanjung No. 20</div>
<div class="t" style="left:847.8px;top:805px;font-size:14px;font-weight:400;color:#000;">Kec. Tidak Diketahui</div>
<div class="t" style="left:1156.00px;top:784px;width:220px;text-align:center;font-size:14px;font-weight:400;color:#000;">Kota Malang</div>
<div class="t" style="left:1389.00px;top:784px;width:100px;text-align:center;font-size:14px;font-weight:400;color:#000;">26</div>
<svg style="position:absolute;left:1553.5px;top:789px;" width="19" height="19" viewBox="0 0 19 19"><g fill="none" stroke="#118411" stroke-width="1.5" stroke-linejoin="round"><path d="M2.6,17.3 L3.8,13.2 A7.9,7.9 0 1 1 6.6,16.1 Z"/></g><path d="M6.9,6.9 C6.6,7.2 6.2,7.9 6.5,9 C7.1,11 8.9,12.9 11,13.5 C12.1,13.8 12.8,13.5 13.1,13.1 L13.4,12.2 L11.7,11.4 L10.9,12.2 C10,11.9 8.6,10.6 8.2,9.6 L8.9,8.8 L8.2,6.9 Z" fill="#118411"/></svg>
<div class="t" style="left:1577.5px;top:788px;font-size:14px;font-weight:700;color:#118411;letter-spacing:0.22px">087487329013</div>
<div class="t" style="left:1755.50px;top:784px;width:100px;text-align:center;font-size:14px;font-weight:400;color:#000;">03</div>
<div class="t" style="left:1884.50px;top:784px;width:110px;text-align:center;font-size:14px;font-weight:400;color:#000;">System</div>
<svg style="position:absolute;left:2061.1px;top:784px;" width="24" height="24" viewBox="0 0 24 24"><g stroke="#5fcdcc" stroke-width="2" fill="none" stroke-linecap="round" stroke-linejoin="round"><polyline points="9 11 12 14 22 3"/><path d="M21 12v7a2 2 0 0 1-2 2H5a2 2 0 0 1-2-2V5a2 2 0 0 1 2-2h11"/></g></svg>
<svg style="position:absolute;left:2087.8px;top:784px;" width="24" height="24" viewBox="0 0 24 24"><g stroke="#0c9b49" stroke-width="2" fill="none" stroke-linecap="round" stroke-linejoin="round"><line x1="12" y1="1" x2="12" y2="23"/><path d="M17 5H9.5a3.5 3.5 0 0 0 0 7h5a3.5 3.5 0 0 1 0 7H6"/></g></svg>
<svg style="position:absolute;left:2116px;top:784px;" width="24" height="24" viewBox="0 0 24 24"><g stroke="#f9b52e" stroke-width="2" fill="none" stroke-linecap="round" stroke-linejoin="round"><path d="M11 4H4a2 2 0 0 0-2 2v14a2 2 0 0 0 2 2h14a2 2 0 0 0 2-2v-7"/><path d="M18.5 2.5a2.121 2.121 0 0 1 3 3L12 15l-4 1 1-4 9.5-9.5z"/></g></svg>
<svg style="position:absolute;left:2143.1px;top:784px;" width="24" height="24" viewBox="0 0 24 24"><g stroke="#5c6cf7" stroke-width="2" fill="none" stroke-linecap="round" stroke-linejoin="round"><polyline points="6 9 6 2 18 2 18 9"/><path d="M6 18H4a2 2 0 0 1-2-2v-5a2 2 0 0 1 2-2h16a2 2 0 0 1 2 2v5a2 2 0 0 1-2 2h-2"/><rect x="6" y="14" width="12" height="8"/></g></svg>
<svg style="position:absolute;left:2170.9px;top:784px;" width="24" height="24" viewBox="0 0 24 24"><g stroke="#f72a5a" stroke-width="2" fill="none" stroke-linecap="round" stroke-linejoin="round"><polyline points="3 6 5 6 21 6"/><path d="M19 6v14a2 2 0 0 1-2 2H7a2 2 0 0 1-2-2V6m3 0V4a2 2 0 0 1 2-2h4a2 2 0 0 1 2 2v2"/><line x1="10" y1="11" x2="10" y2="17"/><line x1="14" y1="11" x2="14" y2="17"/></g></svg>
<div class="t" style="left:57.50px;top:862px;width:100px;text-align:center;font-size:14px;font-weight:400;color:#000;">7</div>
<div class="t" style="left:176.3px;top:862px;font-size:14px;font-weight:400;color:#000;letter-spacing:-0.25px">KSP.06.00001</div>
<div style="position:absolute;left:385.9px;top:861.45px;width:50.3px;height:50.3px;background:#fff;border-radius:50%"></div>
<svg style="position:absolute;left:389.2px;top:864.75px;" width="43.7" height="43.7" viewBox="0 0 44 44"><use href="#avm"/></svg>
<div class="t" style="left:445.6px;top:866px;font-size:14px;font-weight:700;color:#000;transform:scaleX(0.9370);transform-origin:left center;">KARMAN ISWAHYUDI</div>
<div class="t" style="left:446px;top:887px;font-size:14px;font-weight:400;color:#000;">NIK 357312111xxxxxxx</div>
<div class="t" style="left:847.8px;top:862px;font-size:14px;font-weight:400;color:#000;">Jl. Pahlawan No. 22</div>
<div class="t" style="left:847.8px;top:883px;font-size:14px;font-weight:400;color:#000;">Kec. Tidak Diketahui</div>
<div class="t" style="left:1156.00px;top:862px;width:220px;text-align:center;font-size:14px;font-weight:400;color:#000;">Kota Malang</div>
<div class="t" style="left:1389.00px;top:862px;width:100px;text-align:center;font-size:14px;font-weight:400;color:#000;">52</div>
<svg style="position:absolute;left:1553.5px;top:867px;" width="19" height="19" viewBox="0 0 19 19"><g fill="none" stroke="#118411" stroke-width="1.5" stroke-linejoin="round"><path d="M2.6,17.3 L3.8,13.2 A7.9,7.9 0 1 1 6.6,16.1 Z"/></g><path d="M6.9,6.9 C6.6,7.2 6.2,7.9 6.5,9 C7.1,11 8.9,12.9 11,13.5 C12.1,13.8 12.8,13.5 13.1,13.1 L13.4,12.2 L11.7,11.4 L10.9,12.2 C10,11.9 8.6,10.6 8.2,9.6 L8.9,8.8 L8.2,6.9 Z" fill="#118411"/></svg>
<div class="t" style="left:1577.5px;top:866px;font-size:14px;font-weight:700;color:#118411;letter-spacing:0.22px">083423399538</div>
<div class="t" style="left:1755.50px;top:862px;width:100px;text-align:center;font-size:14px;font-weight:400;color:#000;">06</div>
<div class="t" style="left:1884.50px;top:862px;width:110px;text-align:center;font-size:14px;font-weight:400;color:#000;">System</div>
<svg style="position:absolute;left:2061.1px;top:862px;" width="24" height="24" viewBox="0 0 24 24"><g stroke="#5fcdcc" stroke-width="2" fill="none" stroke-linecap="round" stroke-linejoin="round"><polyline points="9 11 12 14 22 3"/><path d="M21 12v7a2 2 0 0 1-2 2H5a2 2 0 0 1-2-2V5a2 2 0 0 1 2-2h11"/></g></svg>
<svg style="position:absolute;left:2087.8px;top:862px;" width="24" height="24" viewBox="0 0 24 24"><g stroke="#0c9b49" stroke-width="2" fill="none" stroke-linecap="round" stroke-linejoin="round"><line x1="12" y1="1" x2="12" y2="23"/><path d="M17 5H9.5a3.5 3.5 0 0 0 0 7h5a3.5 3.5 0 0 1 0 7H6"/></g></svg>
<svg style="position:absolute;left:2116px;top:862px;" width="24" height="24" viewBox="0 0 24 24"><g stroke="#f9b52e" stroke-width="2" fill="none" stroke-linecap="round" stroke-linejoin="round"><path d="M11 4H4a2 2 0 0 0-2 2v14a2 2 0 0 0 2 2h14a2 2 0 0 0 2-2v-7"/><path d="M18.5 2.5a2.121 2.121 0 0 1 3 3L12 15l-4 1 1-4 9.5-9.5z"/></g></svg>
<svg style="position:absolute;left:2143.1px;top:862px;" width="24" height="24" viewBox="0 0 24 24"><g stroke="#5c6cf7" stroke-width="2" fill="none" stroke-linecap="round" stroke-linejoin="round"><polyline points="6 9 6 2 18 2 18 9"/><path d="M6 18H4a2 2 0 0 1-2-2v-5a2 2 0 0 1 2-2h16a2 2 0 0 1 2 2v5a2 2 0 0 1-2 2h-2"/><rect x="6" y="14" width="12" height="8"/></g></svg>
<svg style="position:absolute;left:2170.9px;top:862px;" width="24" height="24" viewBox="0 0 24 24"><g stroke="#f72a5a" stroke-width="2" fill="none" stroke-linecap="round" stroke-linejoin="round"><polyline points="3 6 5 6 21 6"/><path d="M19 6v14a2 2 0 0 1-2 2H7a2 2 0 0 1-2-2V6m3 0V4a2 2 0 0 1 2-2h4a2 2 0 0 1 2 2v2"/><line x1="10" y1="11" x2="10" y2="17"/><line x1="14" y1="11" x2="14" y2="17"/></g></svg>
<div class="t" style="left:57.50px;top:940px;width:100px;text-align:center;font-size:14px;font-weight:400;color:#000;">8</div>
<div class="t" style="left:176.3px;top:940px;font-size:14px;font-weight:400;color:#000;letter-spacing:-0.25px">KSP.06.00002</div>
<svg style="position:absolute;left:389.2px;top:942.75px;" width="43.7" height="43.7" viewBox="0 0 44 44"><use href="#avf"/></svg>
<div class="t" style="left:445.6px;top:944px;font-size:14px;font-weight:700;color:#000;transform:scaleX(0.9370);transform-origin:left center;">ENDAH HASTUTI</div>
<div class="t" style="left:446px;top:965px;font-size:14px;font-weight:400;color:#000;">NIK 350703570xxxxxxx</div>
<div class="t" style="left:847.8px;top:940px;font-size:14px;font-weight:400;color:#000;">Jl. Kebon No. 90</div>
<div class="t" style="left:847.8px;top:961px;font-size:14px;font-weight:400;color:#000;">Kec. Bantur</div>
<div class="t" style="left:1156.00px;top:940px;width:220px;text-align:center;font-size:14px;font-weight:400;color:#000;">Kabupaten Malang</div>
<div class="t" style="left:1389.00px;top:940px;width:100px;text-align:center;font-size:14px;font-weight:400;color:#000;">54</div>
<svg style="position:absolute;left:1553.5px;top:945px;" width="19" height="19" viewBox="0 0 19 19"><g fill="none" stroke="#118411" stroke-width="1.5" stroke-linejoin="round"><path d="M2.6,17.3 L3.8,13.2 A7.9,7.9 0 1 1 6.6,16.1 Z"/></g><path d="M6.9,6.9 C6.6,7.2 6.2,7.9 6.5,9 C7.1,11 8.9,12.9 11,13.5 C12.1,13.8 12.8,13.5 13.1,13.1 L13.4,12.2 L11.7,11.4 L10.9,12.2 C10,11.9 8.6,10.6 8.2,9.6 L8.9,8.8 L8.2,6.9 Z" fill="#118411"/></svg>
<div class="t" style="left:1577.5px;top:944px;font-size:14px;font-weight:700;color:#118411;letter-spacing:0.22px">082418341573</div>
<div class="t" style="left:1755.50px;top:940px;width:100px;text-align:center;font-size:14px;font-weight:400;color:#000;">06</div>
<div class="t" style="left:1884.50px;top:940px;width:110px;text-align:center;font-size:14px;font-weight:400;color:#000;">System</div>
<svg style="position:absolute;left:2061.1px;top:940px;" width="24" height="24" viewBox="0 0 24 24"><g stroke="#5fcdcc" stroke-width="2" fill="none" stroke-linecap="round" stroke-linejoin="round"><polyline points="9 11 12 14 22 3"/><path d="M21 12v7a2 2 0 0 1-2 2H5a2 2 0 0 1-2-2V5a2 2 0 0 1 2-2h11"/></g></svg>
<svg style="position:absolute;left:2087.8px;top:940px;" width="24" height="24" viewBox="0 0 24 24"><g stroke="#0c9b49" stroke-width="2" fill="none" stroke-linecap="round" stroke-linejoin="round"><line x1="12" y1="1" x2="12" y2="23"/><path d="M17 5H9.5a3.5 3.5 0 0 0 0 7h5a3.5 3.5 0 0 1 0 7H6"/></g></svg>
<svg style="position:absolute;left:2116px;top:940px;" width="24" height="24" viewBox="0 0 24 24"><g stroke="#f9b52e" stroke-width="2" fill="none" stroke-linecap="round" stroke-linejoin="round"><path d="M11 4H4a2 2 0 0 0-2 2v14a2 2 0 0 0 2 2h14a2 2 0 0 0 2-2v-7"/><path d="M18.5 2.5a2.121 2.121 0 0 1 3 3L12 15l-4 1 1-4 9.5-9.5z"/></g></svg>
<svg style="position:absolute;left:2143.1px;top:940px;" width="24" height="24" viewBox="0 0 24 24"><g stroke="#5c6cf7" stroke-width="2" fill="none" stroke-linecap="round" stroke-linejoin="round"><polyline points="6 9 6 2 18 2 18 9"/><path d="M6 18H4a2 2 0 0 1-2-2v-5a2 2 0 0 1 2-2h16a2 2 0 0 1 2 2v5a2 2 0 0 1-2 2h-2"/><rect x="6" y="14" width="12" height="8"/></g></svg>
<svg style="position:absolute;left:2170.9px;top:940px;" width="24" height="24" viewBox="0 0 24 24"><g stroke="#f72a5a" stroke-width="2" fill="none" stroke-linecap="round" stroke-linejoin="round"><polyline points="3 6 5 6 21 6"/><path d="M19 6v14a2 2 0 0 1-2 2H7a2 2 0 0 1-2-2V6m3 0V4a2 2 0 0 1 2-2h4a2 2 0 0 1 2 2v2"/><line x1="10" y1="11" x2="10" y2="17"/><line x1="14" y1="11" x2="14" y2="17"/></g></svg>
<div class="t" style="left:57.50px;top:1019px;width:100px;text-align:center;font-size:14px;font-weight:400;color:#000;">9</div>
<div class="t" style="left:176.3px;top:1019px;font-size:14px;font-weight:400;color:#000;letter-spacing:-0.25px">KSP.06.00003</div>
<div style="position:absolute;left:385.9px;top:1018.4499999999999px;width:50.3px;height:50.3px;background:#fff;border-radius:50%"></div>
<svg style="position:absolute;left:389.2px;top:1021.7499999999999px;" width="43.7" height="43.7" viewBox="0 0 44 44"><use href="#avm"/></svg>
<div class="t" style="left:445.6px;top:1023px;font-size:14px;font-weight:700;color:#000;transform:scaleX(0.9370);transform-origin:left center;">NASRULLAH HARYANTI</div>
<div class="t" style="left:446px;top:1044px;font-size:14px;font-weight:400;color:#000;">NIK 357308241xxxxxxx</div>
<!--star-->
<svg style="position:absolute;left:612.6px;top:1030.9px;" width="28" height="27" viewBox="0 0 28 27"><use href="#star"/></svg>
<div class="t" style="left:847.8px;top:1019px;font-size:14px;font-weight:400;color:#000;">Jl. Merdeka No. 14</div>
<div class="t" style="left:847.8px;top:1040px;font-size:14px;font-weight:400;color:#000;">Kec. Tidak Diketahui</div>
<div class="t" style="left:1156.00px;top:1019px;width:220px;text-align:center;font-size:14px;font-weight:400;color:#000;">Kota Malang</div>
<div class="t" style="left:1389.00px;top:1019px;width:100px;text-align:center;font-size:14px;font-weight:400;color:#000;">23</div>
<svg style="position:absolute;left:1553.5px;top:1024px;" width="19" height="19" viewBox="0 0 19 19"><g fill="none" stroke="#118411" stroke-width="1.5" stroke-linejoin="round"><path d="M2.6,17.3 L3.8,13.2 A7.9,7.9 0 1 1 6.6,16.1 Z"/></g><path d="M6.9,6.9 C6.6,7.2 6.2,7.9 6.5,9 C7.1,11 8.9,12.9 11,13.5 C12.1,13.8 12.8,13.5 13.1,13.1 L13.4,12.2 L11.7,11.4 L10.9,12.2 C10,11.9 8.6,10.6 8.2,9.6 L8.9,8.8 L8.2,6.9 Z" fill="#118411"/></svg>
<div class="t" style="left:1577.5px;top:1023px;font-size:14px;font-weight:700;color:#118411;letter-spacing:0.22px">083322759932</div>
<div class="t" style="left:1755.50px;top:1019px;width:100px;text-align:center;font-size:14px;font-weight:400;color:#000;">06</div>
<div class="t" style="left:1884.50px;top:1019px;width:110px;text-align:center;font-size:14px;font-weight:400;color:#000;">System</div>
<svg style="position:absolute;left:2061.1px;top:1019px;" width="24" height="24" viewBox="0 0 24 24"><g stroke="#5fcdcc" stroke-width="2" fill="none" stroke-linecap="round" stroke-linejoin="round"><polyline points="9 11 12 14 22 3"/><path d="M21 12v7a2 2 0 0 1-2 2H5a2 2 0 0 1-2-2V5a2 2 0 0 1 2-2h11"/></g></svg>
<svg style="position:absolute;left:2087.8px;top:1019px;" width="24" height="24" viewBox="0 0 24 24"><g stroke="#0c9b49" stroke-width="2" fill="none" stroke-linecap="round" stroke-linejoin="round"><line x1="12" y1="1" x2="12" y2="23"/><path d="M17 5H9.5a3.5 3.5 0 0 0 0 7h5a3.5 3.5 0 0 1 0 7H6"/></g></svg>
<svg style="position:absolute;left:2116px;top:1019px;" width="24" height="24" viewBox="0 0 24 24"><g stroke="#f9b52e" stroke-width="2" fill="none" stroke-linecap="round" stroke-linejoin="round"><path d="M11 4H4a2 2 0 0 0-2 2v14a2 2 0 0 0 2 2h14a2 2 0 0 0 2-2v-7"/><path d="M18.5 2.5a2.121 2.121 0 0 1 3 3L12 15l-4 1 1-4 9.5-9.5z"/></g></svg>
<svg style="position:absolute;left:2143.1px;top:1019px;" width="24" height="24" viewBox="0 0 24 24"><g stroke="#5c6cf7" stroke-width="2" fill="none" stroke-linecap="round" stroke-linejoin="round"><polyline points="6 9 6 2 18 2 18 9"/><path d="M6 18H4a2 2 0 0 1-2-2v-5a2 2 0 0 1 2-2h16a2 2 0 0 1 2 2v5a2 2 0 0 1-2 2h-2"/><rect x="6" y="14" width="12" height="8"/></g></svg>
<svg style="position:absolute;left:2170.9px;top:1019px;" width="24" height="24" viewBox="0 0 24 24"><g stroke="#f72a5a" stroke-width="2" fill="none" stroke-linecap="round" stroke-linejoin="round"><polyline points="3 6 5 6 21 6"/><path d="M19 6v14a2 2 0 0 1-2 2H7a2 2 0 0 1-2-2V6m3 0V4a2 2 0 0 1 2-2h4a2 2 0 0 1 2 2v2"/><line x1="10" y1="11" x2="10" y2="17"/><line x1="14" y1="11" x2="14" y2="17"/></g></svg>
<div class="t" style="left:57.50px;top:1097px;width:100px;text-align:center;font-size:14px;font-weight:400;color:#000;">10</div>
<div class="t" style="left:176.3px;top:1097px;font-size:14px;font-weight:400;color:#000;letter-spacing:-0.25px">KSP.01.00001</div>
<svg style="position:absolute;left:389.2px;top:1099.75px;" width="43.7" height="43.7" viewBox="0 0 44 44"><use href="#avf"/></svg>
<div class="t" style="left:445.6px;top:1101px;font-size:14px;font-weight:700;color:#000;transform:scaleX(0.9370);transform-origin:left center;">ANASTASIA RAHAYU</div>
<div class="t" style="left:446px;top:1122px;font-size:14px;font-weight:400;color:#000;">NIK 350704510xxxxxxx</div>
<div class="t" style="left:847.8px;top:1097px;font-size:14px;font-weight:400;color:#000;">Jl. Raya Baru No. 41</div>
<div class="t" style="left:847.8px;top:1118px;font-size:14px;font-weight:400;color:#000;">Kec. Sumbermanjing Wetan</div>
<div class="t" style="left:1156.00px;top:1097px;width:220px;text-align:center;font-size:14px;font-weight:400;color:#000;">Kabupaten Malang</div>
<div class="t" style="left:1389.00px;top:1097px;width:100px;text-align:center;font-size:14px;font-weight:400;color:#000;">53</div>
<svg style="position:absolute;left:1553.5px;top:1102px;" width="19" height="19" viewBox="0 0 19 19"><g fill="none" stroke="#118411" stroke-width="1.5" stroke-linejoin="round"><path d="M2.6,17.3 L3.8,13.2 A7.9,7.9 0 1 1 6.6,16.1 Z"/></g><path d="M6.9,6.9 C6.6,7.2 6.2,7.9 6.5,9 C7.1,11 8.9,12.9 11,13.5 C12.1,13.8 12.8,13.5 13.1,13.1 L13.4,12.2 L11.7,11.4 L10.9,12.2 C10,11.9 8.6,10.6 8.2,9.6 L8.9,8.8 L8.2,6.9 Z" fill="#118411"/></svg>
<div class="t" style="left:1577.5px;top:1101px;font-size:14px;font-weight:700;color:#118411;letter-spacing:0.22px">083978428666</div>
<div class="t" style="left:1755.50px;top:1097px;width:100px;text-align:center;font-size:14px;font-weight:400;color:#000;">01</div>
<div class="t" style="left:1884.50px;top:1097px;width:110px;text-align:center;font-size:14px;font-weight:400;color:#000;">System</div>
<svg style="position:absolute;left:2061.1px;top:1097px;" width="24" height="24" viewBox="0 0 24 24"><g stroke="#5fcdcc" stroke-width="2" fill="none" stroke-linecap="round" stroke-linejoin="round"><polyline points="9 11 12 14 22 3"/><path d="M21 12v7a2 2 0 0 1-2 2H5a2 2 0 0 1-2-2V5a2 2 0 0 1 2-2h11"/></g></svg>
<svg style="position:absolute;left:2087.8px;top:1097px;" width="24" height="24" viewBox="0 0 24 24"><g stroke="#0c9b49" stroke-width="2" fill="none" stroke-linecap="round" stroke-linejoin="round"><line x1="12" y1="1" x2="12" y2="23"/><path d="M17 5H9.5a3.5 3.5 0 0 0 0 7h5a3.5 3.5 0 0 1 0 7H6"/></g></svg>
<svg style="position:absolute;left:2116px;top:1097px;" width="24" height="24" viewBox="0 0 24 24"><g stroke="#f9b52e" stroke-width="2" fill="none" stroke-linecap="round" stroke-linejoin="round"><path d="M11 4H4a2 2 0 0 0-2 2v14a2 2 0 0 0 2 2h14a2 2 0 0 0 2-2v-7"/><path d="M18.5 2.5a2.121 2.121 0 0 1 3 3L12 15l-4 1 1-4 9.5-9.5z"/></g></svg>
<svg style="position:absolute;left:2143.1px;top:1097px;" width="24" height="24" viewBox="0 0 24 24"><g stroke="#5c6cf7" stroke-width="2" fill="none" stroke-linecap="round" stroke-linejoin="round"><polyline points="6 9 6 2 18 2 18 9"/><path d="M6 18H4a2 2 0 0 1-2-2v-5a2 2 0 0 1 2-2h16a2 2 0 0 1 2 2v5a2 2 0 0 1-2 2h-2"/><rect x="6" y="14" width="12" height="8"/></g></svg>
<svg style="position:absolute;left:2170.9px;top:1097px;" width="24" height="24" viewBox="0 0 24 24"><g stroke="#f72a5a" stroke-width="2" fill="none" stroke-linecap="round" stroke-linejoin="round"><polyline points="3 6 5 6 21 6"/><path d="M19 6v14a2 2 0 0 1-2 2H7a2 2 0 0 1-2-2V6m3 0V4a2 2 0 0 1 2-2h4a2 2 0 0 1 2 2v2"/><line x1="10" y1="11" x2="10" y2="17"/><line x1="14" y1="11" x2="14" y2="17"/></g></svg>
<div class="t" style="left:52px;top:1179px;font-size:14px;font-weight:400;color:#000;">Showing 1 to 10 of 10,006 entries</div>
<div style="position:absolute;left:1796px;top:1200px;width:459px;height:36px;border:1px solid #dde2ea;border-radius:4px"></div>
<div style="position:absolute;left:1965px;top:1200px;width:1px;height:38px;background:#dde2ea"></div>
<div style="position:absolute;left:2005px;top:1200px;width:1px;height:38px;background:#dde2ea"></div>
<div style="position:absolute;left:2046px;top:1200px;width:1px;height:38px;background:#dde2ea"></div>
<div style="position:absolute;left:2087px;top:1200px;width:1px;height:38px;background:#dde2ea"></div>
<div style="position:absolute;left:2130px;top:1200px;width:1px;height:38px;background:#dde2ea"></div>
<div style="position:absolute;left:2194px;top:1200px;width:1px;height:38px;background:#dde2ea"></div>
<div style="position:absolute;left:1883px;top:1200px;width:42px;height:38px;background:#6576f6"></div>
<div class="t" style="left:1794.80px;top:1209px;width:90px;text-align:center;font-size:14px;font-weight:400;color:#8094ae;">Previous</div>
<div class="t" style="left:1884.00px;top:1209px;width:40px;text-align:center;font-size:14px;font-weight:400;color:#fff;">1</div>
<div class="t" style="left:1925.00px;top:1209px;width:40px;text-align:center;font-size:14px;font-weight:400;color:#6576f6;">2</div>
<div class="t" style="left:1965.50px;top:1209px;width:40px;text-align:center;font-size:14px;font-weight:400;color:#6576f6;">3</div>
<div class="t" style="left:2006.00px;top:1209px;width:40px;text-align:center;font-size:14px;font-weight:400;color:#6576f6;">4</div>
<div class="t" style="left:2047.00px;top:1209px;width:40px;text-align:center;font-size:14px;font-weight:400;color:#6576f6;">5</div>
<div class="t" style="left:2088.80px;top:1210px;width:40px;text-align:center;font-size:12px;font-weight:400;color:#8094ae;">...</div>
<div class="t" style="left:2131.70px;top:1209px;width:60px;text-align:center;font-size:14px;font-weight:400;color:#6576f6;">1001</div>
<div class="t" style="left:2195.70px;top:1209px;width:60px;text-align:center;font-size:14px;font-weight:400;color:#6576f6;">Next</div>
<div class="t" style="left:52px;top:1264px;font-size:14px;font-weight:400;color:#000;">Keterangan :</div>
<div class="t" style="left:52px;top:1285px;font-size:14px;font-weight:400;color:#000;">a. Klik pada Nama Nasabah untuk melihat detail.</div>
<div class="t" style="left:52px;top:1306px;font-size:14px;font-weight:400;color:#000;">b. Tanda</div>
<div style="position:absolute;left:109px;top:1308px;width:52.8px;height:18.7px;background:#fc3566;border-radius:4px"></div>
<div class="t" style="left:105.40px;top:1307px;width:60px;text-align:center;font-size:11px;font-weight:400;color:#fff;-webkit-text-stroke:0.2px #fff">MERAH</div>
<div class="t" style="left:165.5px;top:1306px;font-size:14px;font-weight:400;color:#000;letter-spacing:-0.17px">adalah Nasabah yang berstatus BLOKIR.</div>
<div class="t" style="left:52px;top:1327px;font-size:14px;font-weight:400;color:#000;">c. Tanda</div>
<svg style="position:absolute;left:108.4px;top:1329.7px;" width="15.6" height="15" viewBox="0 0 28 27"><use href="#star"/></svg>
<div class="t" style="left:128px;top:1327px;font-size:14px;font-weight:400;color:#000;">adalah <b style="letter-spacing:-0.45px">Nasabah Prioritas</b>.</div>
</body></html>
